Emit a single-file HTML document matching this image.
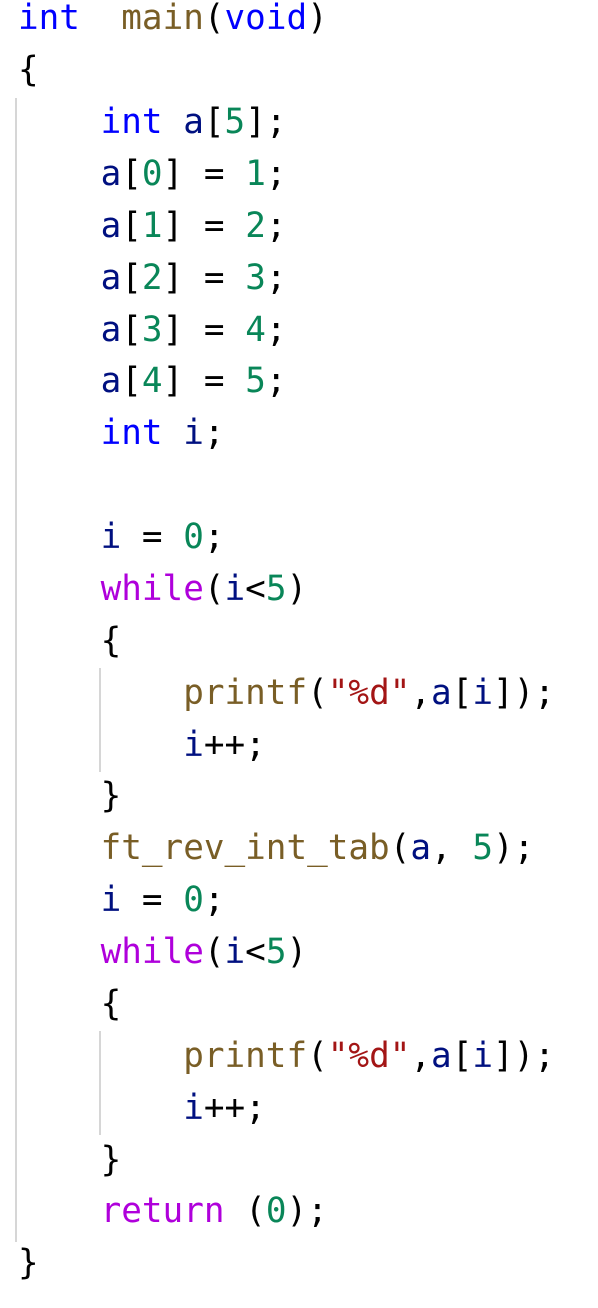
<!DOCTYPE html>
<html><head><meta charset="utf-8"><style>
html,body{margin:0;padding:0;background:#fff;width:598px;height:1308px;overflow:hidden;position:relative}
.l{position:absolute;left:18px;height:52px;line-height:52px;font-family:"DejaVu Sans Mono","Liberation Mono",monospace;font-size:34.3px;color:#000;white-space:pre}
.k{color:#0000ff}.f{color:#795e26}.v{color:#001080}.n{color:#098658}.s{color:#a31515}.c{color:#af00db}
.g{position:absolute;width:2px;background:#d6d6d6}
</style></head><body>
<div class="g" style="left:15px;top:98px;height:1144px"></div>
<div class="g" style="left:99px;top:668px;height:104px"></div>
<div class="g" style="left:99px;top:1031px;height:104px"></div>
<div class="l" style="top:-8px"><span class="k">int</span>  <span class="f">main</span>(<span class="k">void</span>)</div>
<div class="l" style="top:44px">{</div>
<div class="l" style="top:96px">    <span class="k">int</span> <span class="v">a</span>[<span class="n">5</span>];</div>
<div class="l" style="top:148px">    <span class="v">a</span>[<span class="n">0</span>] = <span class="n">1</span>;</div>
<div class="l" style="top:200px">    <span class="v">a</span>[<span class="n">1</span>] = <span class="n">2</span>;</div>
<div class="l" style="top:252px">    <span class="v">a</span>[<span class="n">2</span>] = <span class="n">3</span>;</div>
<div class="l" style="top:304px">    <span class="v">a</span>[<span class="n">3</span>] = <span class="n">4</span>;</div>
<div class="l" style="top:355px">    <span class="v">a</span>[<span class="n">4</span>] = <span class="n">5</span>;</div>
<div class="l" style="top:407px">    <span class="k">int</span> <span class="v">i</span>;</div>
<div class="l" style="top:511px">    <span class="v">i</span> = <span class="n">0</span>;</div>
<div class="l" style="top:563px">    <span class="c">while</span>(<span class="v">i</span>&lt;<span class="n">5</span>)</div>
<div class="l" style="top:615px">    {</div>
<div class="l" style="top:667px">        <span class="f">printf</span>(<span class="s">"%d"</span>,<span class="v">a</span>[<span class="v">i</span>]);</div>
<div class="l" style="top:719px">        <span class="v">i</span>++;</div>
<div class="l" style="top:770px">    }</div>
<div class="l" style="top:822px">    <span class="f">ft_rev_int_tab</span>(<span class="v">a</span>, <span class="n">5</span>);</div>
<div class="l" style="top:874px">    <span class="v">i</span> = <span class="n">0</span>;</div>
<div class="l" style="top:926px">    <span class="c">while</span>(<span class="v">i</span>&lt;<span class="n">5</span>)</div>
<div class="l" style="top:978px">    {</div>
<div class="l" style="top:1030px">        <span class="f">printf</span>(<span class="s">"%d"</span>,<span class="v">a</span>[<span class="v">i</span>]);</div>
<div class="l" style="top:1082px">        <span class="v">i</span>++;</div>
<div class="l" style="top:1134px">    }</div>
<div class="l" style="top:1185px">    <span class="c">return</span> (<span class="n">0</span>);</div>
<div class="l" style="top:1237px">}</div>
</body></html>
